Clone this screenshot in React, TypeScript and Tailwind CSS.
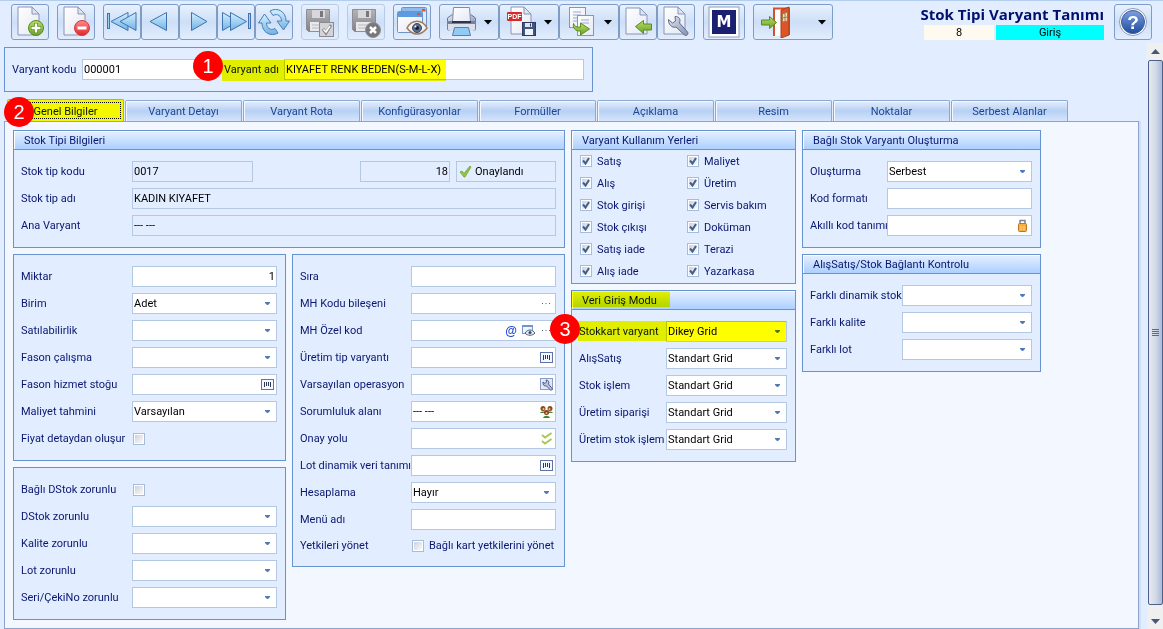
import { useId } from 'react';
import type { ReactNode } from 'react';
import clsx from 'clsx';

/* ---------- Toolbar icons ---------- */

function Page({ x = 4, y = 1, w = 21, h = 28 }: { x?: number; y?: number; w?: number; h?: number }) {
  const f = Math.round(w / 3);
  return (
    <g stroke="#8a93b8" strokeLinejoin="round">
      <path d={`M${x} ${y}h${w - f}l${f} ${f}v${h - f}h-${w}z`} fill="url(#paper)" />
      <path d={`M${x + w - f} ${y}v${f}h${f}z`} fill="#dfe4f2" />
    </g>
  );
}

function Defs() {
  return (
    <svg width="0" height="0" className="absolute" aria-hidden="true">
      <defs>
        <linearGradient id="paper" x1="0" y1="0" x2="1" y2="1">
          <stop offset="0" stopColor="#ffffff" />
          <stop offset="1" stopColor="#e4e8f3" />
        </linearGradient>
        <linearGradient id="green" x1="0" y1="0" x2="0" y2="1">
          <stop offset="0" stopColor="#b5dd6a" />
          <stop offset="1" stopColor="#6aa324" />
        </linearGradient>
        <linearGradient id="red" x1="0" y1="0" x2="0" y2="1">
          <stop offset="0" stopColor="#ff8a8a" />
          <stop offset="1" stopColor="#e0262c" />
        </linearGradient>
        <linearGradient id="sky" x1="0" y1="0" x2="0" y2="1">
          <stop offset="0" stopColor="#d6efff" />
          <stop offset="1" stopColor="#6fb3e4" />
        </linearGradient>
        <linearGradient id="steel" x1="0" y1="0" x2="0" y2="1">
          <stop offset="0" stopColor="#b4b4b8" />
          <stop offset="1" stopColor="#808086" />
        </linearGradient>
        <linearGradient id="metal" x1="0" y1="0" x2="1" y2="1">
          <stop offset="0" stopColor="#dfe4ee" />
          <stop offset="1" stopColor="#8592ae" />
        </linearGradient>
        <linearGradient id="help" x1="0" y1="0" x2="0" y2="1">
          <stop offset="0" stopColor="#7e9ee0" />
          <stop offset="1" stopColor="#1f4d9e" />
        </linearGradient>
      </defs>
    </svg>
  );
}

function Icon({ children, size = 32 }: { children: ReactNode; size?: number }) {
  return (
    <svg width={size} height={size} viewBox={`0 0 ${size} ${size}`} className="shrink-0" fill="none" aria-hidden="true">
      {children}
    </svg>
  );
}

const NewIcon = () => (
  <Icon>
    <Page />
    <circle cx="22" cy="22" r="7.5" fill="url(#green)" stroke="#5b8a1e" />
    <path d="M22 17v10M17 22h10" stroke="#5b8a1e" strokeWidth="4" />
    <path d="M22 17.5v9M17.5 22h9" stroke="#fff" strokeWidth="2.4" />
  </Icon>
);

const DeleteIcon = () => (
  <Icon>
    <Page />
    <circle cx="22" cy="22" r="7.5" fill="url(#red)" stroke="#d0393d" />
    <path d="M17.5 22h9" stroke="#fff" strokeWidth="3" />
  </Icon>
);

const FirstIcon = () => (
  <Icon>
    <rect x="1.5" y="7.5" width="2" height="15" fill="#9fd0f3" stroke="#3f72ae" />
    <path d="M5 15.5L22 6.5v18z" fill="url(#sky)" stroke="#3f72ae" strokeLinejoin="round" />
    <path d="M14 15.5L30 6.5v18z" fill="url(#sky)" stroke="#3f72ae" strokeLinejoin="round" />
  </Icon>
);

const PrevIcon = () => (
  <Icon>
    <path d="M6 15.5L22.5 6.5v18z" fill="url(#sky)" stroke="#3f72ae" strokeLinejoin="round" />
  </Icon>
);

const NextIcon = () => (
  <Icon>
    <path d="M25 15.5L9.5 6.5v18z" fill="url(#sky)" stroke="#3f72ae" strokeLinejoin="round" />
  </Icon>
);

const LastIcon = () => (
  <Icon>
    <rect x="28.5" y="7.5" width="2" height="15" fill="#9fd0f3" stroke="#3f72ae" />
    <path d="M18 15.5L2.5 6.5v18z" fill="url(#sky)" stroke="#3f72ae" strokeLinejoin="round" />
    <path d="M26.5 15.5L10.5 6.5v18z" fill="url(#sky)" stroke="#3f72ae" strokeLinejoin="round" />
  </Icon>
);

const RefreshIcon = () => (
  <Icon>
    <g fill="url(#sky)" stroke="#4a7fb8" strokeLinejoin="round">
      <path d="M12 5C19 1 28 5 28 15h3.5L25.5 24 19 15h4.5c0-5-4-8-8.5-5.5z" />
      <path d="M20 27C13 31 4 27 4 17H.5L6.5 8 13 17H8.5c0 5 4 8 8.5 5.5z" />
    </g>
  </Icon>
);

const Disk = () => (
  <g>
    <path d="M2.5 3.5h23v22h-21l-2-2z" fill="url(#steel)" stroke="#8e8e94" />
    <rect x="8" y="4" width="13" height="8" fill="#d8d8dc" />
    <rect x="16" y="5" width="3" height="6" fill="#77777d" />
    <rect x="6" y="16" width="17" height="9" fill="#e9e9ec" />
    <path d="M8 19h12M8 22h12" stroke="#b9b9be" />
  </g>
);

const SaveIcon = () => (
  <Icon>
    <Disk />
    <rect x="15.5" y="16.5" width="14" height="14" fill="#d4d4d8" stroke="#8a8a90" />
    <path d="M19 23l3 4 5-8" stroke="#8a8a90" strokeWidth="3" />
    <path d="M19.5 23.5l2.5 2.5 4-6" stroke="#fff" strokeWidth="1.5" />
  </Icon>
);

const CancelSaveIcon = () => (
  <Icon>
    <Disk />
    <circle cx="23" cy="24" r="7.5" fill="#77777c" stroke="#909096" />
    <path d="M20 21l6 6M26 21l-6 6" stroke="#fff" strokeWidth="2.5" />
  </Icon>
);

const ViewIcon = () => (
  <Icon>
    <rect x="5.5" y="1.5" width="25" height="20" rx="1" fill="#dceafb" stroke="#6d94c8" />
    <rect x="6" y="2" width="24" height="4" fill="#8dbbec" />
    <rect x="26" y="3" width="3" height="2" fill="#e5532d" />
    <rect x="1.5" y="5.5" width="25" height="21" rx="1" fill="url(#paper)" stroke="#6d94c8" />
    <rect x="2" y="6" width="24" height="5" fill="#5c9be0" />
    <rect x="21" y="7" width="3" height="2" fill="#e5532d" />
    <path d="M11 22c5-9 15-9 20 0-6 8-14 8-20 0z" fill="#f4f4f6" stroke="#a07a58" strokeWidth="1.5" />
    <circle cx="21" cy="22" r="4.5" fill="#5c6f92" stroke="#3a4764" />
    <circle cx="21" cy="22" r="2" fill="#161d2e" />
    <circle cx="19.5" cy="20.5" r="1" fill="#fff" />
  </Icon>
);

const PrintIcon = () => (
  <Icon>
    <path d="M1.5 12l4-3h20l4 3v11h-28z" fill="url(#metal)" stroke="#6a7694" />
    <path d="M7.5 1.5h16l1 14h-18z" fill="url(#paper)" stroke="#7f8bab" />
    <path d="M1 15h29v7c0 2-1 3-3 3H4c-2 0-3-1-3-3z" fill="#7682a0" />
    <path d="M2 18h27v5c0 1-1 2-3 2H5c-2 0-3-1-3-2z" fill="#dbe1ec" />
    <path d="M8.5 21.5h14l2 8h-18z" fill="#8fcbf4" stroke="#5f7ba6" />
    <path d="M6 16h19" stroke="#2c3650" strokeWidth="2" />
  </Icon>
);

const PdfIcon = () => (
  <Icon>
    <Page x={5} y={1} w={20} h={27} />
    <rect x="1" y="6" width="15" height="9" rx="1" fill="#d62a2a" />
    <text x="8.5" y="13" textAnchor="middle" fontSize="7" fontWeight="bold" fill="#fff" fontFamily="Liberation Sans, sans-serif">
      PDF
    </text>
    <rect x="16.5" y="16.5" width="13" height="13" fill="#41557f" stroke="#2b3a5e" />
    <rect x="19" y="17" width="7" height="4" fill="#dfe5f2" />
    <rect x="19" y="23" width="8" height="6" fill="#eef2fa" />
    <path d="M24.5 17.5v3" stroke="#2b3a5e" />
  </Icon>
);

const CopyIcon = () => (
  <Icon>
    <rect x="3.5" y="1.5" width="16" height="20" fill="url(#paper)" stroke="#8a93b8" />
    <path d="M7 6h8M7 9h8M7 12h8M7 15h4" stroke="#9ba9cc" />
    <rect x="11.5" y="9.5" width="16" height="20" fill="url(#paper)" stroke="#8a93b8" />
    <path d="M15 14h8M15 17h8" stroke="#9ba9cc" />
    <path d="M7.5 17.5c1 3 3 4 7 3.5v-4l9 6-9 6v-4c-5 .5-8-3-7-7.5z" fill="url(#green)" stroke="#5b8a1e" />
  </Icon>
);

const ImportIcon = () => (
  <Icon>
    <Page x={4} y={2} w={21} h={26} />
    <path d="M13.5 20.5l8-6v3.5h8v6h-8v3.5z" fill="url(#green)" stroke="#5b8a1e" strokeLinejoin="round" />
  </Icon>
);

const WrenchIcon = () => (
  <Icon>
    <Page x={4} y={1} w={21} h={27} />
    <path
      d="M8.5 13.5l4 3.500 3-2-.5-4.500c4-.5 6 3 4.500 6.500l8 9c1.500 2-1 4.500-3 3l-8.500-8c-4 1.500-8-3-7.500-7.500z"
      fill="url(#metal)"
      stroke="#5d6b8c"
      strokeLinejoin="round"
    />
  </Icon>
);

const LogoIcon = () => (
  <Icon>
    <rect x="1" y="1" width="30" height="30" fill="#fff" stroke="#8f9cc0" />
    <rect x="4" y="4" width="24" height="24" fill="#18206f" />
    <text x="16" y="21" textAnchor="middle" fontSize="15" fontWeight="bold" fill="#fff" fontFamily="DejaVu Sans, sans-serif">
      M
    </text>
  </Icon>
);

const ExitIcon = () => (
  <Icon>
    <path d="M14 30V2.500h15V29" stroke="#d2502a" strokeWidth="2" fill="#fdfdff" />
    <path d="M21 4l8-3v28l-8 3z" fill="#df5427" stroke="#a8401c" />
    <path d="M22.500 8l5-2v9l-5 1z" fill="#f1ddb5" stroke="#a77a4a" />
    <path d="M25 7v8.500M22.500 12l5-1" stroke="#a77a4a" />
    <path d="M1.500 14h8v-3.500l7 6-7 6V19h-8z" fill="url(#green)" stroke="#5b8a1e" strokeLinejoin="round" />
  </Icon>
);

const HelpIcon = () => (
  <Icon>
    <circle cx="16" cy="16" r="13.5" fill="#fff" stroke="#8d9ab8" />
    <circle cx="16" cy="16" r="11.5" fill="url(#help)" stroke="#3d5f9e" />
    <text x="16" y="23" textAnchor="middle" fontSize="19" fontWeight="bold" fill="#fff" fontFamily="Liberation Sans, sans-serif">
      ?
    </text>
  </Icon>
);

/* ---------- Field icons ---------- */

const BarcodeIcon = () => (
  <Icon size={13}>
    <rect x=".5" y="1.5" width="12" height="10" fill="#f4f7fd" stroke="#5f73a8" />
    <path d="M3.5 4v5M5.5 4v4M7.5 4v4M9.5 4v5" stroke="#2d3858" />
  </Icon>
);

const SmallWrenchIcon = () => (
  <Icon size={13}>
    <rect x=".5" y=".5" width="12" height="11" fill="#e3e9f6" stroke="#8b9cc6" />
    <path d="M3 4l2 1.500L6.500 4 6 2c2.500 0 3.500 2 2.500 4l4 5-1.500 1.500-4.500-4.500C4 8.500 2.500 6.500 3 4z" fill="#b8c3da" stroke="#4c5e8a" />
  </Icon>
);

const PeopleIcon = () => (
  <Icon size={13}>
    <path d="M0 8c1-2 5-2 6 0zM7 8c1-2 5-2 6 0zM3 13c1-3 6-3 7 0z" fill="#3f8a35" />
    <circle cx="3" cy="3.5" r="2.5" fill="#8a4a1c" />
    <circle cx="10" cy="3.5" r="2.5" fill="#8a4a1c" />
    <circle cx="6.5" cy="7.5" r="2.5" fill="#7d3f16" />
    <circle cx="3.5" cy="4" r="1" fill="#f0c08a" />
    <circle cx="9.5" cy="4" r="1" fill="#f0c08a" />
    <circle cx="6.5" cy="8" r="1" fill="#f0c08a" />
  </Icon>
);

const DoubleCheckIcon = () => (
  <Icon size={13}>
    <path d="M2 3l3 2.500L11.500 1M2 9l3 2.500L11.500 7" stroke="#a6c957" strokeWidth="2" />
  </Icon>
);

const AtIcon = () => (
  <span className="font-['Liberation_Sans',sans-serif] text-[12px] leading-none font-bold text-[#2448d8]">@</span>
);

const WindowEyeIcon = () => (
  <Icon size={13}>
    <rect x=".5" y="1.5" width="10" height="8" fill="#f0f5fd" stroke="#7a98c8" />
    <rect x="0" y="1" width="11" height="2" fill="#6f96cc" />
    <path d="M3 9c2.500-4 7.500-4 10 0-2.500 3-7.500 3-10 0z" fill="#e6e9f0" stroke="#4f5f80" />
    <circle cx="8" cy="8.5" r="1.5" fill="#3c4a68" />
  </Icon>
);

const DotsIcon = () => (
  <Icon size={13}>
    <path d="M2 6.500h1M5.500 6.500h1M9 6.500h1" stroke="#44669c" />
  </Icon>
);

const LockIcon = () => (
  <Icon size={13}>
    <path d="M4 6V1.500h5V6" stroke="#7b8596" strokeWidth="1.500" />
    <rect x="2.500" y="4.500" width="8" height="8" rx="1" fill="#f5b041" stroke="#c0741c" />
    <path d="M5 7v4M8 7v4" stroke="#fad58a" />
  </Icon>
);

const ApprovedIcon = () => (
  <Icon size={13}>
    <path d="M1 7l2-1 2 2.500L11 1l1 1-6 10H5z" fill="#93c448" stroke="#7fae42" strokeLinejoin="round" />
  </Icon>
);

/* ---------- Building blocks ---------- */

function ToolButton({ label, icon, wide, menu, faded }: { label: string; icon: ReactNode; wide?: string; menu?: boolean; faded?: boolean }) {
  return (
    <button
      type="button"
      title={label}
      aria-label={label}
      className={clsx(
        'flex h-9 items-center rounded-[3px] border bg-linear-to-b from-[#e8f1fe] via-[#cddff7] to-[#e2edfd]',
        wide ?? 'w-[38px]',
        menu ? 'justify-between pr-[6px] pl-[6px]' : 'justify-center',
        faded ? 'border-[#b9cbe4]' : 'border-[#7f9cc6]',
      )}
    >
      {icon}
      {menu && (
        <svg width="8" height="5" viewBox="0 0 8 5" aria-hidden="true">
          <path d="M0 0h8L4 4.500z" fill="#000" />
        </svg>
      )}
    </button>
  );
}

function Marker({ n, className }: { n: number; className: string }) {
  return (
    <span
      className={clsx(
        'absolute z-20 flex size-[30px] items-center justify-center rounded-full bg-[#fe0000] font-["Liberation_Sans",sans-serif] text-[20px] leading-none text-white',
        className,
      )}
    >
      {n}
    </span>
  );
}

function Highlight({ className }: { className: string }) {
  return <span className={clsx('pointer-events-none absolute z-10 bg-[#ffff00] mix-blend-multiply', className)} />;
}

function Group({ title, children, className, mark }: { title?: string; children: ReactNode; className?: string; mark?: boolean }) {
  return (
    <section className="border border-[#6793d1] bg-[#e2eeff]">
      {title && (
        <h2 className="relative h-[19px] border-b border-[#6793d1] bg-linear-to-b from-[#e6f0ff] to-[#acd0ff] pl-[10px] leading-[19px] shadow-[inset_1px_1px_0_#fff]">
          {title}
          {mark && <Highlight className="-left-px top-0 h-4 w-[99px]" />}
        </h2>
      )}
      <div className={className ?? 'flex flex-col gap-[6px] py-[11px] pr-2 pl-[7px]'}>{children}</div>
    </section>
  );
}

const box = 'h-[21px] w-full min-w-0 rounded-none border border-[#b4c8e4] text-black outline-none';
const caption = 'pt-[2px] whitespace-nowrap';

type RowProps = {
  label: string;
  value?: string;
  kind?: 'text' | 'select' | 'check';
  labelWidth?: string;
  icons?: ReactNode;
  right?: boolean;
  readOnly?: boolean;
  note?: string;
  marked?: boolean;
};

function Row({ label, value = '', kind = 'text', labelWidth = 'w-[111px]', icons, right, readOnly, note, marked }: RowProps) {
  const id = useId();
  return (
    <div className={clsx('relative flex items-center', note ? 'h-[19px]' : 'h-[21px]')}>
      <label htmlFor={id} className={clsx('shrink-0', caption, labelWidth)}>
        {label}
      </label>
      {kind === 'text' && (
        <div className="relative flex flex-1">
          <input
            id={id}
            defaultValue={value}
            readOnly={readOnly}
            className={clsx(box, 'px-px', readOnly ? 'bg-transparent' : 'bg-white', right && 'text-right')}
          />
          {icons && <span className="absolute inset-y-0 right-[3px] flex items-center gap-[5px]">{icons}</span>}
        </div>
      )}
      {kind === 'select' && <Select id={id} value={value} />}
      {kind === 'check' && (
        <span className="flex items-center gap-[5px]">
          <CheckBox id={id} />
          {note && <label htmlFor={id} className={caption}>{note}</label>}
        </span>
      )}
      {marked && (
        <>
          <Highlight className="-left-px right-px top-0 h-5" />
          <Marker n={3} className="-top-[7px] -left-[29px]" />
        </>
      )}
    </div>
  );
}

function Select({ id, value }: { id: string; value: string }) {
  return (
    <div className="relative flex flex-1">
      <select id={id} defaultValue={value} className={clsx(box, 'appearance-none bg-white pt-[2px] pr-4 pl-px')}>
        <option>{value}</option>
      </select>
      <svg width="5" height="3" viewBox="0 0 5 3" className="pointer-events-none absolute top-[9px] right-[7px]" aria-hidden="true">
        <path d="M0 0h5v1L3 3H2L0 1z" fill="#4f7ab5" />
      </svg>
    </div>
  );
}

function CheckBox({ id, checked }: { id: string; checked?: boolean }) {
  return (
    <span className="relative ml-px flex size-3">
      <input
        id={id}
        type="checkbox"
        defaultChecked={checked}
        className="peer size-3 appearance-none border border-[#a5bddb] bg-linear-to-br from-[#c9ced6] to-[#ffffff] shadow-[inset_0_0_0_1px_#fff]"
      />
      <svg width="12" height="12" viewBox="0 0 12 12" className="pointer-events-none absolute hidden peer-checked:block" aria-hidden="true">
        <path d="M3 5.500l2.500 3L9 3" fill="none" stroke="#3f5f92" strokeWidth="2" />
      </svg>
    </span>
  );
}

function UsageCheck({ label }: { label: string }) {
  const id = useId();
  return (
    <div className="flex h-[22px] items-center gap-[5px]">
      <CheckBox id={id} checked />
      <label htmlFor={id} className={caption}>{label}</label>
    </div>
  );
}

/* ---------- Data ---------- */

const tabs = ['Genel Bilgiler', 'Varyant Detayı', 'Varyant Rota', 'Konfigürasyonlar', 'Formüller', 'Açıklama', 'Resim', 'Noktalar', 'Serbest Alanlar'];

const usages = [
  'Satış', 'Maliyet',
  'Alış', 'Üretim',
  'Stok girişi', 'Servis bakım',
  'Stok çıkışı', 'Doküman',
  'Satış iade', 'Terazi',
  'Alış iade', 'Yazarkasa',
];

/* ---------- Screen ---------- */

function Toolbar() {
  return (
    <header className="flex h-[43px] shrink-0 items-start gap-2 border-t border-[#b3cdee] pt-[3px] pr-[11px] pl-[11px]">
      <ToolButton label="Yeni" icon={<NewIcon />} />
      <ToolButton label="Sil" icon={<DeleteIcon />} />
      <div className="flex">
        <ToolButton label="İlk kayıt" icon={<FirstIcon />} />
        <ToolButton label="Önceki kayıt" icon={<PrevIcon />} />
        <ToolButton label="Sonraki kayıt" icon={<NextIcon />} />
        <ToolButton label="Son kayıt" icon={<LastIcon />} />
        <ToolButton label="Yenile" icon={<RefreshIcon />} />
      </div>
      <ToolButton label="Kaydet" icon={<SaveIcon />} faded />
      <ToolButton label="Vazgeç" icon={<CancelSaveIcon />} faded />
      <ToolButton label="İzle" icon={<ViewIcon />} />
      <div className="flex">
        <ToolButton label="Yazdır" icon={<PrintIcon />} wide="w-[60px]" menu />
        <ToolButton label="PDF kaydet" icon={<PdfIcon />} wide="w-[60px]" menu />
        <ToolButton label="Kopyala" icon={<CopyIcon />} wide="w-[60px]" menu />
        <ToolButton label="İçe aktar" icon={<ImportIcon />} />
        <ToolButton label="Ayarlar" icon={<WrenchIcon />} />
      </div>
      <ToolButton label="Modül" icon={<LogoIcon />} wide="w-[42px]" />
      <ToolButton label="Çıkış" icon={<ExitIcon />} wide="w-20" menu />
      <div className="mr-[2px] ml-auto flex flex-col items-end">
        <h1 className="font-['Open_Sans',sans-serif] text-[15px] leading-[21px] font-bold whitespace-nowrap text-[#00106e]">
          Stok Tipi Varyant Tanımı
        </h1>
        <div className="flex gap-[2px] text-center leading-[15px] text-black">
          <span className="w-[70px] bg-[#fffaf0]">8</span>
          <span className="w-[108px] bg-[#00ffff]">Giriş</span>
        </div>
      </div>
      <ToolButton label="Yardım" icon={<HelpIcon />} />
    </header>
  );
}

function VariantHeader() {
  return (
    <div className="relative mt-1 flex h-[45px] max-w-[589px] items-center border border-[#6793d1] pr-2 pl-[7px]">
      <label htmlFor="kod" className={clsx('w-[70px] shrink-0', caption)}>Varyant kodu</label>
      <div className="w-[121px] shrink-0">
        <input id="kod" defaultValue="000001" className={clsx(box, 'bg-white px-px')} />
      </div>
      <div className="relative ml-[21px] flex flex-1 items-center">
        <label htmlFor="ad" className={clsx('w-[60px] shrink-0', caption)}>Varyant adı</label>
        <input id="ad" defaultValue="KIYAFET RENK BEDEN(S-M-L-X)" className={clsx(box, 'bg-white px-px')} />
        <Highlight className="top-px -left-[2px] h-[21px] w-[224px]" />
      </div>
      <Marker n={1} className="top-[3px] left-[188px]" />
    </div>
  );
}

function Tabs() {
  return (
    <nav role="tablist" className="relative mt-[7px] flex h-[22px] items-end gap-px pl-[3px]">
      {tabs.map((tab, i) => (
        <button
          key={tab}
          type="button"
          role="tab"
          aria-selected={i === 0}
          className={clsx(
            'relative w-[117px] min-w-0 rounded-t-[2px] border border-b-0 border-[#8ea8d2] pt-[3px] whitespace-nowrap',
            i === 0
              ? 'h-[22px] bg-[#f3f7ff] text-[#0b1b60]'
              : 'h-[21px] bg-linear-to-b from-[#e4eefc] via-[#b7d0f4] to-[#d5e5fc] text-[#1c4594] shadow-[inset_1px_1px_0_#f4f8ff]',
          )}
        >
          {tab}
          {i === 0 && (
            <>
              <span className="absolute inset-[2px] border border-dotted border-black" />
              <Highlight className="inset-0" />
            </>
          )}
        </button>
      ))}
      <Marker n={2} className="-top-[2px] left-0" />
    </nav>
  );
}

function ScrollBar() {
  return (
    <div className="flex w-4 shrink-0 flex-col items-center bg-[#efefef]">
      <button type="button" aria-label="Yukarı" className="flex h-[17px] w-full items-center justify-center">
        <svg width="9" height="5" viewBox="0 0 9 5"><path d="M0 5h9L4.500 0z" fill="#4a5578" /></svg>
      </button>
      <div className="flex w-[15px] flex-1 flex-col items-center justify-center gap-px rounded-[2px] border border-[#4d608c] bg-linear-to-r from-[#e6eaf1] via-[#d3dae5] to-[#a9bcd8]">
        <span className="h-px w-[7px] bg-[#566a92]" />
        <span className="h-px w-[7px] bg-[#566a92]" />
        <span className="h-px w-[7px] bg-[#566a92]" />
        <span className="h-px w-[7px] bg-[#566a92]" />
      </div>
      <button type="button" aria-label="Aşağı" className="flex h-6 w-full items-center justify-center pt-[9px]">
        <svg width="9" height="5" viewBox="0 0 9 5"><path d="M0 0h9L4.500 5z" fill="#4a5578" /></svg>
      </button>
    </div>
  );
}

export default function App() {
  return (
    <div className="flex min-h-screen flex-col bg-[#e2eeff] font-['Roboto','Noto_Sans',sans-serif] text-[11px] text-[#0a1670]">
      <Defs />
      <Toolbar />
      <div className="flex flex-1">
        <main className="flex min-w-0 flex-1 flex-col pr-2 pl-1">
          <VariantHeader />
          <Tabs />
          <div className="grid flex-1 grid-cols-[552fr_225fr_239fr_91fr] items-start gap-[6px] border border-[#8ea3cb] bg-[#f3f7ff] pt-2 pb-2 pl-2 shadow-[2px_0_0_#cfdff6]">
            <div className="flex flex-col gap-[6px]">
              <Group title="Stok Tipi Bilgileri">
                <div className="flex justify-between gap-[6px]">
                  <div className="w-[232px]">
                    <Row label="Stok tip kodu" value="0017" readOnly />
                  </div>
                  <div className="flex flex-1 justify-end gap-[6px]">
                    <input aria-label="Stok tip no" readOnly defaultValue="18" className={clsx(box, 'max-w-[90px] bg-transparent px-px text-right')} />
                    <span className="flex h-[21px] w-[100px] items-center gap-[3px] border border-[#b4c8e4] pl-[2px] text-black">
                      <ApprovedIcon />
                      <span className={caption}>Onaylandı</span>
                    </span>
                  </div>
                </div>
                <Row label="Stok tip adı" value="KADIN KIYAFET" readOnly />
                <Row label="Ana Varyant" value="--- ---" readOnly />
              </Group>

              <div className="grid grid-cols-2 items-start gap-[6px]">
                <div className="flex flex-col gap-[6px]">
                  <Group>
                    <Row label="Miktar" value="1" right />
                    <Row label="Birim" kind="select" value="Adet" />
                    <Row label="Satılabilirlik" kind="select" />
                    <Row label="Fason çalışma" kind="select" />
                    <Row label="Fason hizmet stoğu" icons={<BarcodeIcon />} />
                    <Row label="Maliyet tahmini" kind="select" value="Varsayılan" />
                    <Row label="Fiyat detaydan oluşur" kind="check" />
                  </Group>
                  <Group>
                    <Row label="Bağlı DStok zorunlu" kind="check" />
                    <Row label="DStok zorunlu" kind="select" />
                    <Row label="Kalite zorunlu" kind="select" />
                    <Row label="Lot zorunlu" kind="select" />
                    <Row label="Seri/ÇekiNo zorunlu" kind="select" />
                  </Group>
                </div>
                <Group>
                  <Row label="Sıra" />
                  <Row label="MH Kodu bileşeni" icons={<DotsIcon />} />
                  <Row label="MH Özel kod" icons={<><AtIcon /><WindowEyeIcon /><DotsIcon /></>} />
                  <Row label="Üretim tip varyantı" icons={<BarcodeIcon />} />
                  <Row label="Varsayılan operasyon" icons={<SmallWrenchIcon />} />
                  <Row label="Sorumluluk alanı" value="--- ---" icons={<PeopleIcon />} />
                  <Row label="Onay yolu" icons={<DoubleCheckIcon />} />
                  <Row label="Lot dinamik veri tanımı" icons={<BarcodeIcon />} />
                  <Row label="Hesaplama" kind="select" value="Hayır" />
                  <Row label="Menü adı" />
                  <Row label="Yetkileri yönet" kind="check" note="Bağlı kart yetkilerini yönet" />
                </Group>
              </div>
            </div>

            <div className="flex flex-col gap-[6px]">
              <Group title="Varyant Kullanım Yerleri" className="grid grid-cols-2 pr-[2px] pb-px pl-[7px]">
                {usages.map((u) => (
                  <UsageCheck key={u} label={u} />
                ))}
              </Group>
              <Group title="Veri Giriş Modu" mark>
                <Row label="Stokkart varyant" labelWidth="w-[87px]" kind="select" value="Dikey Grid" marked />
                <Row label="AlışSatış" labelWidth="w-[87px]" kind="select" value="Standart Grid" />
                <Row label="Stok işlem" labelWidth="w-[87px]" kind="select" value="Standart Grid" />
                <Row label="Üretim siparişi" labelWidth="w-[87px]" kind="select" value="Standart Grid" />
                <Row label="Üretim stok işlem" labelWidth="w-[87px]" kind="select" value="Standart Grid" />
              </Group>
            </div>

            <div className="flex flex-col gap-[6px]">
              <Group title="Bağlı Stok Varyantı Oluşturma">
                <Row label="Oluşturma" labelWidth="w-[77px]" kind="select" value="Serbest" />
                <Row label="Kod formatı" labelWidth="w-[77px]" />
                <Row label="Akıllı kod tanımı" labelWidth="w-[77px]" icons={<LockIcon />} />
              </Group>
              <Group title="AlışSatış/Stok Bağlantı Kontrolu">
                <Row label="Farklı dinamik stok" labelWidth="w-[92px]" kind="select" />
                <Row label="Farklı kalite" labelWidth="w-[92px]" kind="select" />
                <Row label="Farklı lot" labelWidth="w-[92px]" kind="select" />
              </Group>
            </div>
          </div>
        </main>
        <ScrollBar />
      </div>
    </div>
  );
}
